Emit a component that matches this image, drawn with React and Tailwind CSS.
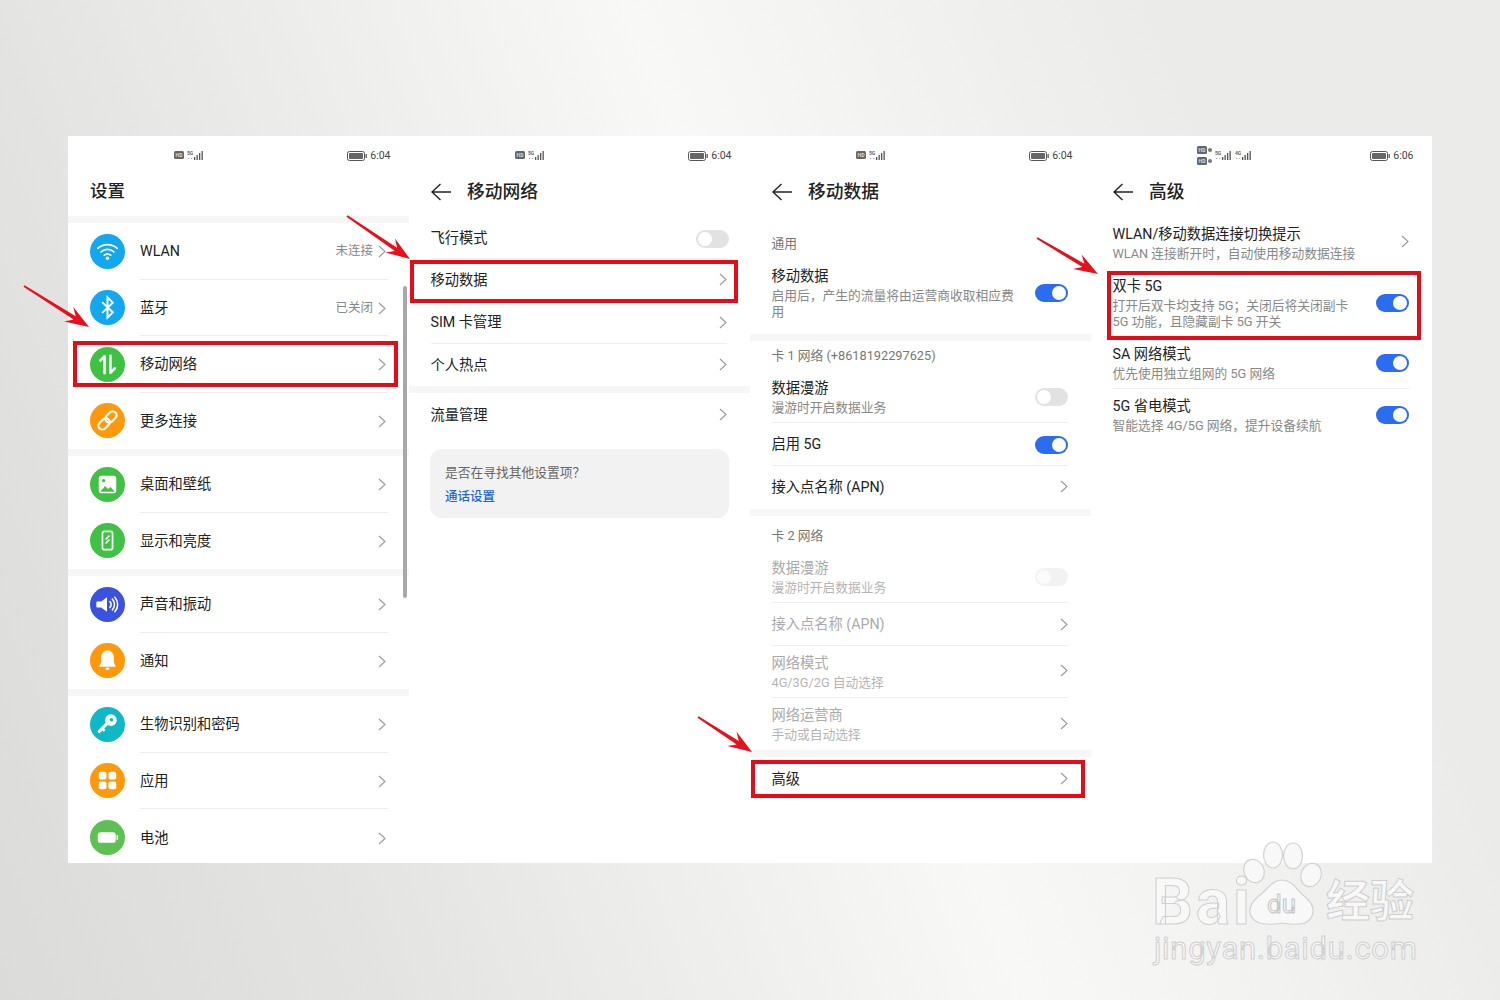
const Chevron = ({ className = 'ml-auto' }) => (
  <svg width="8" height="13" viewBox="0 0 8 13" fill="none" stroke="#999" strokeWidth="1.1" className={`shrink-0 ${className}`}>
    <path d="M1 1l6 5.5L1 12" />
  </svg>
);

const Toggle = ({ on, dim, className = '' }) => (
  <div
    className={`ml-auto mt-[2px] flex h-[18px] w-[33px] shrink-0 items-center rounded-full p-[2px] ${className} ${
      on ? 'justify-end bg-[#2a6df0]' : dim ? 'bg-[#f2f2f2]' : 'bg-[#e2e2e2]'
    }`}
  >
    <div className={`h-[14px] w-[14px] rounded-full ${dim ? 'bg-[#fbfbfb]' : 'bg-white'}`} />
  </div>
);

const Gap = () => <div className="h-[7px] shrink-0 bg-[#f6f6f6]" />;

const Signal = ({ label }) => (
  <svg width="17" height="11" viewBox="0 0 17 11" className="shrink-0">
    <text x="0" y="4.5" fontSize="5" fontWeight="700" fill="#666">{label}</text>
    <rect x="1" y="8" width="1.3" height="1" fill="#aaa" />
    <rect x="4" y="8" width="1.3" height="1" fill="#aaa" />
    <rect x="7" y="7" width="1.3" height="3" fill="#555" />
    <rect x="9.5" y="5" width="1.3" height="5" fill="#555" />
    <rect x="12" y="3" width="1.3" height="7" fill="#555" />
    <rect x="14.5" y="1" width="1.3" height="9" fill="#555" />
  </svg>
);

const HdChip = () => (
  <svg width="10" height="8" viewBox="0 0 10 8" className="shrink-0">
    <rect width="10" height="8" rx="1.5" fill="#666" />
    <text x="5" y="6" fontSize="5" fontWeight="700" textAnchor="middle" fill="#ddd">HD</text>
  </svg>
);

const StatusBar = ({ time, dual }) => (
  <div className="flex h-[38px] shrink-0 items-center justify-between pl-[106px] pr-[18.5px] pt-[2px]">
    {dual ? (
      <div className="-mt-[2px] flex items-center gap-[3px]">
        <div className="flex flex-col gap-[3px]">
          <div className="flex items-center gap-[1px]"><HdChip /><div className="h-[4px] w-[4px] rounded-full bg-[#777]" /></div>
          <div className="flex items-center gap-[1px]"><HdChip /><div className="h-[4px] w-[4px] rounded-full bg-[#777]" /></div>
        </div>
        <Signal label="5G" />
        <Signal label="4G" />
      </div>
    ) : (
      <div className="-mt-[2px] flex items-center gap-[3px]">
        <HdChip />
        <Signal label="5G" />
      </div>
    )}
    <div className="flex items-center gap-[3px]">
      <svg width="20" height="10" viewBox="0 0 20 10">
        <rect x="0.5" y="0.5" width="17" height="9" rx="2" fill="none" stroke="#555" />
        <rect x="2" y="2" width="14" height="6" rx="0.8" fill="#666" />
        <rect x="18.5" y="3" width="1.3" height="4" fill="#555" />
      </svg>
      <span className="text-[10.5px] leading-none text-[#444]">{time}</span>
    </div>
  </div>
);

const Header = ({ title }) => (
  <div className="mb-[8px] flex h-[34px] shrink-0 items-center pl-[22px] pt-[2px]">
    <svg width="20" height="18" viewBox="0 0 20 18" fill="none" stroke="#222" strokeWidth="1.4">
      <path d="M20 9H1M9.5 1L1 9l8.5 8" />
    </svg>
    <span className="ml-[16px] text-[17.75px] font-medium text-[#222]">{title}</span>
  </div>
);

const Circle = ({ color, children }) => (
  <svg width="35" height="35" viewBox="0 0 36 36" className="shrink-0">
    <circle cx="18" cy="18" r="18" fill={color} />
    {children}
  </svg>
);

const icons = {
  wifi: (
    <Circle color="#12a7ee">
      <g fill="none" stroke="#fff" strokeWidth="1.8" strokeLinecap="round">
        <path d="M8 14.8a14.5 14.5 0 0 1 20 0" />
        <path d="M11.4 18.4a9.6 9.6 0 0 1 13.2 0" />
        <path d="M14.8 21.8a4.8 4.8 0 0 1 6.4 0" />
      </g>
      <circle cx="18" cy="25" r="1.8" fill="#fff" />
    </Circle>
  ),
  bluetooth: (
    <Circle color="#12a7ee">
      <path d="M12.5 12.5L23.5 23 18 28.5V7.5L23.5 13 12.5 23.5" fill="none" stroke="#fff" strokeWidth="2" />
    </Circle>
  ),
  mobile: (
    <Circle color="#3fc244">
      <g fill="none" stroke="#fff" strokeWidth="2.6" strokeLinecap="round" strokeLinejoin="round">
        <path d="M15 27V9.5L10.5 14" />
        <path d="M21 9v17.5l4.5-4.5" />
      </g>
    </Circle>
  ),
  link: (
    <Circle color="#ff980a">
      <g fill="none" stroke="#fff" strokeWidth="2.2" transform="rotate(-45 18 18)">
        <rect x="6.5" y="14" width="13" height="8" rx="4" />
        <rect x="16.5" y="14" width="13" height="8" rx="4" />
      </g>
    </Circle>
  ),
  image: (
    <Circle color="#3fc244">
      <rect x="9" y="9" width="18" height="18" rx="2.5" fill="#fff" />
      <circle cx="14" cy="14" r="1.7" fill="#3fc244" />
      <path d="M10.5 25.5l5-6 3 3 2.5-2 4.5 5z" fill="#3fc244" />
    </Circle>
  ),
  display: (
    <Circle color="#3fc244">
      <rect x="12.8" y="8.5" width="10.4" height="19" rx="2" fill="none" stroke="#fff" strokeWidth="1.8" />
      <path d="M16 17l4-4M16 21l4-4" stroke="#fff" strokeWidth="1.5" />
    </Circle>
  ),
  sound: (
    <Circle color="#3b52e0">
      <path d="M7.5 15h4l6-4.5v15l-6-4.5h-4a1 1 0 0 1-1-1v-4a1 1 0 0 1 1-1z" fill="#fff" />
      <g fill="none" stroke="#fff" strokeWidth="1.6" strokeLinecap="round">
        <path d="M20.5 15a4.2 4.2 0 0 1 0 6" />
        <path d="M23 12.5a8 8 0 0 1 0 11" />
        <path d="M25.5 10.5a11 11 0 0 1 0 15" />
      </g>
    </Circle>
  ),
  bell: (
    <Circle color="#ff980a">
      <path d="M18 7.5a6.5 6.5 0 0 0-6.5 6.5v5.5L9.5 24.5h17l-2-5V14A6.5 6.5 0 0 0 18 7.5z" fill="#fff" />
      <rect x="16" y="25.5" width="4" height="2" rx="1" fill="#fff" />
    </Circle>
  ),
  key: (
    <Circle color="#10b7c6">
      <circle cx="21.5" cy="13.5" r="6" fill="#fff" />
      <circle cx="22" cy="13" r="1.8" fill="#10b7c6" />
      <path d="M18 16.5L9.5 25" stroke="#fff" strokeWidth="3.2" strokeLinecap="round" />
      <path d="M12.5 22l2.5 2.5" stroke="#fff" strokeWidth="2.6" />
    </Circle>
  ),
  apps: (
    <Circle color="#ff980a">
      <rect x="9" y="9" width="8" height="8" rx="2" fill="#fff" />
      <rect x="19" y="9" width="8" height="8" rx="2" fill="#fff" />
      <rect x="9" y="19" width="8" height="8" rx="2" fill="#fff" />
      <rect x="19" y="19" width="8" height="8" rx="2" fill="#fff" />
    </Circle>
  ),
  battery: (
    <Circle color="#5cc052">
      <rect x="8" y="12.5" width="18.5" height="11" rx="3" fill="#fff" />
      <rect x="27.3" y="15.5" width="1.6" height="5" rx="0.6" fill="#fff" />
    </Circle>
  ),
};

const SettingsRow = ({ icon, label, value, last }) => (
  <div className="flex h-[56.5px] shrink-0 items-center pl-[22px]">
    {icons[icon]}
    <div className={`ml-[15px] mr-[21px] flex h-full flex-1 items-center pr-[2px] pt-[2px] ${last ? '' : 'border-b border-[#eeeeee]'}`}>
      <span className="text-[14.25px] text-[#222]">{label}</span>
      {value && <span className="ml-auto text-[12.5px] text-[#888]">{value}</span>}
      <Chevron className={value ? 'ml-[5px]' : 'ml-auto'} />
    </div>
  </div>
);

const SettingsColumn = () => (
  <div className="relative flex w-[341px] shrink-0 flex-col overflow-hidden">
    <StatusBar time="6:04" />
    <div className="mb-[8px] flex h-[34px] shrink-0 items-center pl-[22px] text-[17.5px] font-medium text-[#222]">设置</div>
    <Gap />
    <SettingsRow icon="wifi" label="WLAN" value="未连接" />
    <SettingsRow icon="bluetooth" label="蓝牙" value="已关闭" />
    <SettingsRow icon="mobile" label="移动网络" />
    <SettingsRow icon="link" label="更多连接" last />
    <Gap />
    <SettingsRow icon="image" label="桌面和壁纸" />
    <SettingsRow icon="display" label="显示和亮度" last />
    <Gap />
    <SettingsRow icon="sound" label="声音和振动" />
    <SettingsRow icon="bell" label="通知" last />
    <Gap />
    <SettingsRow icon="key" label="生物识别和密码" />
    <SettingsRow icon="apps" label="应用" />
    <SettingsRow icon="battery" label="电池" last />
    <div className="absolute left-[335px] top-[150px] h-[312px] w-[3.5px] rounded-full bg-[#a8a8a8]" />
  </div>
);

// one list item: height in px comes through className, sub is an optional second line
const Item = ({ title, sub, dim, line, className, children }) => (
  <div className={`ml-[21.5px] mr-[23px] flex shrink-0 items-center ${line ? 'border-b border-[#eeeeee]' : ''} ${className}`}>
    <div className={`min-w-0 ${sub ? 'pt-[2px]' : ''}`}>
      <div className={`text-[14.25px] leading-[20px] ${dim ? 'text-[#aaaaaa]' : 'text-[#222]'}`}>{title}</div>
      {sub && (
        <div className={`mt-[2px] text-[12.75px] leading-[16px] ${dim ? 'text-[#b4b4b4]' : 'text-[#888]'}`}>{sub}</div>
      )}
    </div>
    {children}
  </div>
);

const SectionLabel = ({ className, children }) => (
  <div className={`flex shrink-0 items-center pl-[21.5px] text-[12.75px] text-[#777] ${className}`}>{children}</div>
);

const NetworkColumn = () => (
  <div className="flex w-[341px] shrink-0 flex-col">
    <StatusBar time="6:04" />
    <Header title="移动网络" />
    <div className="h-[1px] shrink-0" />
    <Item title="飞行模式" line className="h-[42.25px]"><Toggle className="-mr-[2px]" /></Item>
    <Item title="移动数据" line className="h-[42.25px]"><Chevron /></Item>
    <Item title="SIM 卡管理" line className="h-[42.25px]"><Chevron /></Item>
    <Item title="个人热点" className="h-[42.25px]"><Chevron /></Item>
    <Gap />
    <Item title="流量管理" className="h-[43px]"><Chevron /></Item>
    <div className="ml-[21px] mr-[21px] mt-[13px] h-[69px] rounded-[12px] bg-[#f2f2f2] pl-[15px] pt-[15px]">
      <div className="text-[12.75px] leading-[18px] text-[#666]">是否在寻找其他设置项？</div>
      <div className="mt-[6px] text-[12.5px] font-medium leading-[18px] text-[#1f66d8]">通话设置</div>
    </div>
  </div>
);

const DataColumn = () => (
  <div className="flex w-[341px] shrink-0 flex-col">
    <StatusBar time="6:04" />
    <Header title="移动数据" />
    <SectionLabel className="h-[46px] pt-[10px]">通用</SectionLabel>
    <Item
      title="移动数据"
      sub={<>启用后，产生的流量将由运营商收取相应费<br />用</>}
      className="h-[72px] pb-[12px]"
    >
      <Toggle on />
    </Item>
    <Gap />
    <SectionLabel className="h-[29px] pt-[1px]">卡 1 网络 (+8618192297625)</SectionLabel>
    <Item title="数据漫游" sub="漫游时开启数据业务" line className="h-[53px]"><Toggle /></Item>
    <Item title="启用 5G" line className="h-[43px] pb-[1px]"><Toggle on /></Item>
    <Item title="接入点名称 (APN)" className="h-[43px] pb-[2px]"><Chevron /></Item>
    <Gap />
    <SectionLabel className="h-[35px] pt-[4px]">卡 2 网络</SectionLabel>
    <Item title="数据漫游" sub="漫游时开启数据业务" dim line className="h-[52px] pb-[2px]"><Toggle dim /></Item>
    <Item title="接入点名称 (APN)" dim line className="h-[43px]"><Chevron /></Item>
    <Item title="网络模式" sub="4G/3G/2G 自动选择" dim line className="h-[52px] pb-[2px]"><Chevron /></Item>
    <Item title="网络运营商" sub="手动或自动选择" dim className="h-[52px] pb-[2px]"><Chevron /></Item>
    <Gap />
    <Item title="高级" className="h-[43px]"><Chevron /></Item>
  </div>
);

const AdvancedColumn = () => (
  <div className="flex w-[341px] shrink-0 flex-col">
    <StatusBar time="6:06" dual />
    <Header title="高级" />
    <Item title="WLAN/移动数据连接切换提示" sub="WLAN 连接断开时，自动使用移动数据连接" className="h-[53px] pb-[2px]">
      <Chevron />
    </Item>
    <Item
      title="双卡 5G"
      sub={<>打开后双卡均支持 5G；关闭后将关闭副卡<br />5G 功能，且隐藏副卡 5G 开关</>}
      className="h-[68px] pb-[3px]"
    >
      <Toggle on />
    </Item>
    <Item title="SA 网络模式" sub="优先使用独立组网的 5G 网络" line className="h-[52px] pb-[2px]"><Toggle on /></Item>
    <Item title="5G 省电模式" sub="智能选择 4G/5G 网络，提升设备续航" className="h-[51px] pb-[2px]"><Toggle on /></Item>
  </div>
);

// red call-out arrow, tail -> tip
const Arrow = ({ x1, y1, x2, y2 }) => {
  const len = Math.hypot(x2 - x1, y2 - y1);
  const ux = (x2 - x1) / len;
  const uy = (y2 - y1) / len;
  const nx = -uy;
  const ny = ux;
  const at = (along, side) => `${x2 - ux * along + nx * side},${y2 - uy * along + ny * side}`;
  const points = [
    at(len, 1),
    at(17, 2),
    at(24, 8.5),
    at(0, 0),
    at(24, -8.5),
    at(17, -2),
    at(len, -1),
  ].join(' ');
  return <polygon points={points} fill="#e8101c" />;
};

const Callout = ({ className }) => (
  <div className={`pointer-events-none absolute border-[4px] border-[#e50c18] ${className}`} />
);

const Watermark = () => (
  <div className="pointer-events-none absolute left-[1140px] top-[835px] h-[135px] w-[290px]">
    <svg width="290" height="100" viewBox="0 0 290 100" className="absolute left-0 top-0">
      <g fill="#f8f8f8" stroke="#d2d2d2" strokeWidth="1.2">
        <ellipse cx="114" cy="36" rx="10" ry="12" transform="rotate(-25 114 36)" />
        <ellipse cx="133" cy="20" rx="9.5" ry="13" />
        <ellipse cx="153" cy="21" rx="9.5" ry="13" />
        <ellipse cx="171" cy="40" rx="10" ry="12" transform="rotate(25 171 40)" />
        <path d="M142 45c10 0 14 9 21 15 9 7 12 14 9 21-3 8-13 10-30 7-17 3-27 1-31-7-3-7 0-14 9-21 8-6 12-15 22-15z" />
      </g>
    </svg>
    <span className="absolute left-[12px] top-[40px] text-[64px] font-bold leading-[56px] tracking-[3px] text-[#f8f8f8] [-webkit-text-stroke:1px_#cfcfcf]">Bai</span>
    <span className="absolute left-[127px] top-[54px] text-[26px] leading-[30px] text-[#f8f8f8] [-webkit-text-stroke:1px_#c6c6c6]">du</span>
    <span className="absolute left-[186px] top-[37px] text-[44px] font-bold leading-[60px] text-[#f8f8f8] [-webkit-text-stroke:1px_#cfcfcf]">经验</span>
    <span className="absolute left-[14px] top-[99px] text-[31px] leading-[30px] tracking-[0.7px] text-[#f6f6f6] [-webkit-text-stroke:1px_#d0d0d0]">jingyan.baidu.com</span>
  </div>
);

export default function App() {
  return (
    <div className="relative h-[1000px] w-[1500px] overflow-hidden bg-[linear-gradient(68deg,#dbdbd9_0%,#e3e3e1_20%,#f8f8f6_54%,#ebebe9_82%,#ebebe9_100%)] px-[68px] pt-[136px] font-['Roboto','Noto_Sans_CJK_SC',sans-serif]">
      <div className="flex h-[727px] w-[1364px] overflow-hidden bg-white">
        <SettingsColumn />
        <NetworkColumn />
        <DataColumn />
        <AdvancedColumn />
      </div>

      <Callout className="left-[73px] top-[341px] h-[46px] w-[325px]" />
      <Callout className="left-[410px] top-[260px] h-[43px] w-[328px]" />
      <Callout className="left-[751px] top-[760px] h-[38px] w-[334px]" />
      <Callout className="left-[1107px] top-[271px] h-[69px] w-[314px]" />

      <svg width="1500" height="1000" viewBox="0 0 1500 1000" className="pointer-events-none absolute left-0 top-0">
        <Arrow x1={24} y1={286} x2={89} y2={327} />
        <Arrow x1={347} y1={216} x2={410} y2={259} />
        <Arrow x1={698} y1={717} x2={752} y2={752} />
        <Arrow x1={1037} y1={238} x2={1098} y2={274} />
      </svg>

      <Watermark />
    </div>
  );
}
